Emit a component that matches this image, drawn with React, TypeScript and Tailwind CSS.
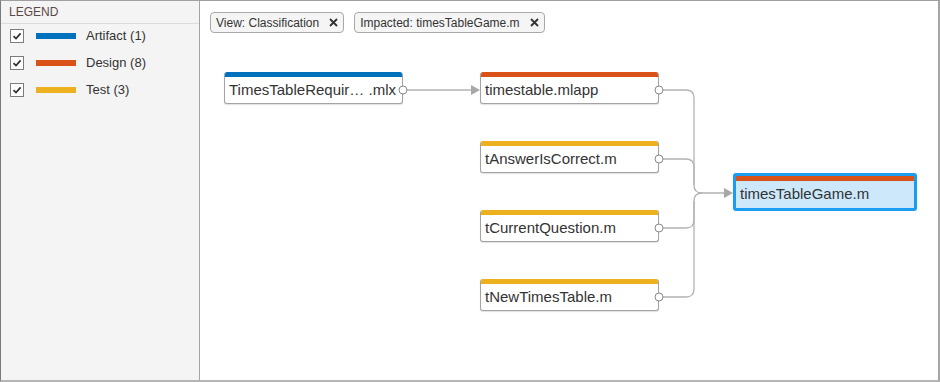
import React from "react"

const font = { fontFamily: '"Liberation Sans", Arial, sans-serif' }

type LegendItem = { label: string; color: string }

const legend: LegendItem[] = [
  { label: "Artifact (1)", color: "bg-[#0072bd]" },
  { label: "Design (8)", color: "bg-[#d95319]" },
  { label: "Test (3)", color: "bg-[#edb120]" },
]

type FileNode = { name: string; bar: string; left: string; top: string }

const nodes: FileNode[] = [
  { name: "TimesTableRequir… .mlx", bar: "bg-[#0072bd]", left: "left-[24px]", top: "top-[71px]" },
  { name: "timestable.mlapp", bar: "bg-[#d95319]", left: "left-[280px]", top: "top-[71px]" },
  { name: "tAnswerIsCorrect.m", bar: "bg-[#edb120]", left: "left-[280px]", top: "top-[140px]" },
  { name: "tCurrentQuestion.m", bar: "bg-[#edb120]", left: "left-[280px]", top: "top-[209px]" },
  { name: "tNewTimesTable.m", bar: "bg-[#edb120]", left: "left-[280px]", top: "top-[278px]" },
]

function CheckBox() {
  return (
    <div className="flex h-[14px] w-[14px] items-center justify-center border border-[#7d7d7d] bg-white">
      <svg width="10" height="10" viewBox="0 0 10 10">
        <path d="M1.5 5.2 L4 7.6 L8.6 2.4" fill="none" stroke="#303030" strokeWidth="1.7" />
      </svg>
    </div>
  )
}

function Chip({ label }: { label: string }) {
  return (
    <div className="flex h-[21px] items-center gap-[10px] rounded-[4px] border border-[#a9a9a9] bg-[#f5f5f5] pl-[5px] pr-[5px] text-[12px] text-[#333]">
      <span>{label}</span>
      <svg width="9" height="9" viewBox="0 0 9 9">
        <path d="M1 1 L8 8 M8 1 L1 8" stroke="#333" strokeWidth="1.8" />
      </svg>
    </div>
  )
}

function Edges() {
  return (
    <svg className="pointer-events-none absolute left-0 top-0" width="740" height="380">
      <g fill="none" stroke="#b3b3b3" strokeWidth="1.3">
        <path d="M207 89 H273" />
        <path d="M463 89 H486 Q494 89 494 97 V184 Q494 192 502 192 H526" />
        <path d="M463 158 H486 Q494 158 494 166 V184" />
        <path d="M463 227 H486 Q494 227 494 219 V200 Q494 192 502 192" />
        <path d="M463 296 H486 Q494 296 494 288 V200" />
      </g>
      <g fill="#a8a8a8">
        <polygon points="271,84 280,89 271,94" />
        <polygon points="524,187 533,192 524,197" />
      </g>
      <g fill="#fff" stroke="#8a8a8a" strokeWidth="1">
        <circle cx="203" cy="89" r="4" />
        <circle cx="459" cy="89" r="4" />
        <circle cx="459" cy="158" r="4" />
        <circle cx="459" cy="227" r="4" />
        <circle cx="459" cy="296" r="4" />
      </g>
    </svg>
  )
}

export default function App() {
  return (
    <div
      className="flex h-[382px] w-[940px] border-b-2 border-l border-r-2 border-t border-b-[#b5b5b5] border-l-[#7a7a7a] border-r-[#a5a5a5] border-t-[#a0a0a0] bg-white"
      style={font}
    >
      {/* legend */}
      <div className="flex w-[199px] flex-col border-r border-[#a3a3a3] bg-[#f4f4f4]">
        <div className="flex h-[23px] items-center border-b border-[#dcdcdc] pl-[8px] text-[12px] text-[#5a4848]">
          LEGEND
        </div>
        <div className="flex flex-col gap-[13px] pl-[9px] pt-[5px]">
          {legend.map((item) => (
            <div key={item.label} className="flex h-[14px] items-center">
              <CheckBox />
              <div className={`ml-[12px] h-[6px] w-[40px] ${item.color}`} />
              <span className="ml-[10px] text-[13px] text-[#333]">{item.label}</span>
            </div>
          ))}
        </div>
      </div>

      {/* canvas */}
      <div className="relative flex-1 bg-white">
        <div className="flex gap-[10px] pl-[10px] pt-[11px]">
          <Chip label="View: Classification" />
          <Chip label="Impacted: timesTableGame.m" />
        </div>

        {nodes.map((n) => (
          <div
            key={n.name}
            className={`absolute ${n.left} ${n.top} flex h-[32px] w-[179px] flex-col overflow-hidden rounded-[3px] border border-t-0 border-[#a3a3a3] bg-white shadow-[0_1px_1px_rgba(0,0,0,0.12)]`}
          >
            <div className={`h-[5px] ${n.bar}`} />
            <div className="flex flex-1 items-center whitespace-pre pl-[4px] text-[15px] text-[#333]">
              {n.name}
            </div>
          </div>
        ))}

        <div className="absolute left-[533px] top-[172px] flex h-[38px] w-[184px] flex-col rounded-[3px] border-[3px] border-[#1a9cf2] bg-[#cde8fb]">
          <div className="h-[5px] bg-[#d95319]" />
          <div className="flex flex-1 items-center pl-[4px] text-[15px] text-[#333]">timesTableGame.m</div>
        </div>

        <Edges />
      </div>
    </div>
  )
}
